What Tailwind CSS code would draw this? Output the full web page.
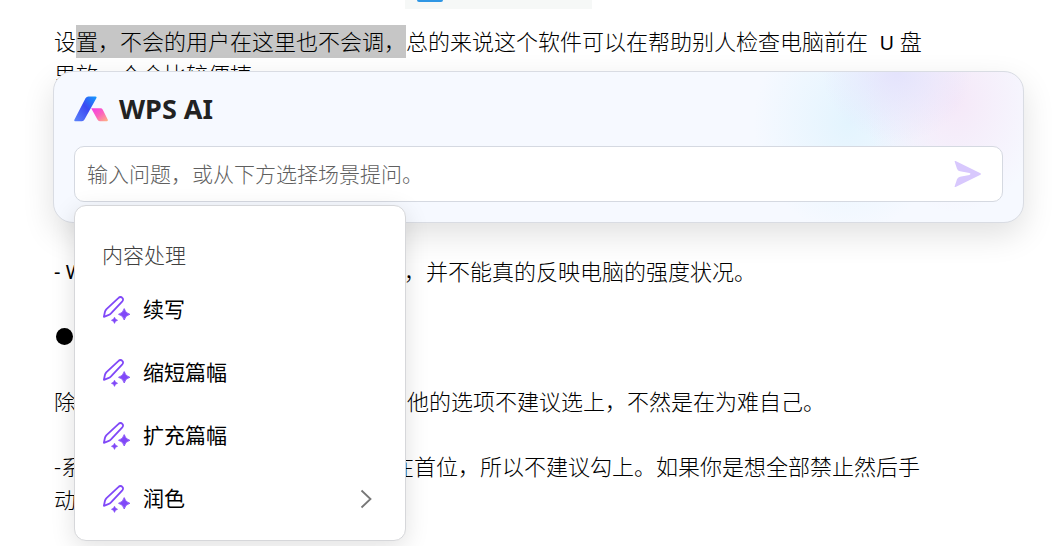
<!DOCTYPE html>
<html lang="zh-CN">
<head>
<meta charset="utf-8">
<title>WPS AI</title>
<script src="https://cdn.jsdelivr.net/npm/@tailwindcss/browser@4"></script>
</head>
<body class="relative min-h-screen overflow-hidden bg-white font-['Noto_Sans','Noto_Sans_CJK_SC',sans-serif] text-black">

<svg class="hidden">
  <symbol id="pen" viewBox="0 0 28 28">
    <path d="M.9 20.800 1.900 16Q2.300 14.400 3.500 13.100L15.600 1.800a2.500 2.500 0 0 1 3.700 0 2.500 2.500 0 0 1 0 3.600L8 17.400Q6.800 18.600 5.300 19.100Z" fill="none" stroke="#8048f8" stroke-width="1.800" stroke-linejoin="round"/>
    <path d="M21.200 12.600Q22.300 17.200 26.900 18.300 22.300 19.400 21.200 24 20.100 19.400 15.500 18.300 20.100 17.200 21.200 12.600Z" fill="#8048f8" stroke="#8048f8" stroke-width=".8" stroke-linejoin="round"/>
    <path d="M11.500 21.200Q12.100 23.700 14.600 24.300 12.100 24.900 11.500 27.400 10.900 24.900 8.400 24.300 10.900 23.700 11.500 21.200Z" fill="#8048f8" stroke="#8048f8" stroke-width=".6" stroke-linejoin="round"/>
  </symbol>
</svg>

<!-- Document -->
<main class="pl-[54px] text-[22px] leading-[33px] font-light whitespace-nowrap">
  <div class="ml-[351px] h-[9px] w-[187px] bg-[#f6f8f7]">
    <div class="ml-3 h-[2px] w-[26px] rounded-b-sm bg-[#2f96e4]"></div>
  </div>
  <p class="mt-4 leading-8">设<span class="inline-block h-[33px] bg-[#c6c6c6] align-top">置，不会的用户在这里也不会调，</span>总的来说这个软件可以在帮助别人检查电脑前在&nbsp; <span class="text-xl font-normal">U</span> 盘<br>里放一个会比较便捷</p>
  <p class="mt-[165px] flex"><span class="w-[350px] text-xl leading-[33px] font-normal">- W</span><span>，并不能真的反映电脑的强度状况。</span></p>
  <p class="mt-8 flex h-[33px] items-center"><span class="ml-[2px] size-[17px] rounded-full bg-black"></span></p>
  <p class="mt-8 flex"><span class="w-[353px]">除</span><span>他的选项不建议选上，不然是在为难自己。</span></p>
  <div class="mt-8">
    <p class="flex"><span class="w-[338px]">-系</span><span>在首位，所以不建议勾上。如果你是想全部禁止然后手</span></p>
    <p>动</p>
  </div>
</main>

<!-- Assistant panel floating over the document -->
<section aria-label="WPS AI" class="absolute top-[71px] right-8 left-[53px] rounded-[20px] border border-[#d9dce3] bg-[#f6f9ff] bg-[radial-gradient(ellipse_75px_70px_at_87%_0%,#e4e3fc,#e4e3fc00),radial-gradient(ellipse_90px_110px_at_93%_20%,#f5e8f8,#f5e8f800),radial-gradient(ellipse_95px_110px_at_82%_34%,#e3f4fe,#e3f4fe00)] px-5 pb-5 shadow-[0_12px_32px_rgba(0,0,0,0.12)]">
  <header class="flex h-[74px] items-center gap-[11px]">
    <svg class="h-[26px] w-[34px]" viewBox="0 0 34 26" aria-hidden="true">
      <defs>
        <linearGradient id="blue" x1="1" y1="0" x2="0" y2="1"><stop stop-color="#149cff"/><stop offset=".45" stop-color="#3b49f2"/><stop offset="1" stop-color="#5c84fb"/></linearGradient>
        <linearGradient id="pink" x1="0" y1="0" x2="1" y2="1"><stop stop-color="#f53ae9"/><stop offset=".5" stop-color="#fb62bd"/><stop offset="1" stop-color="#ffb681"/></linearGradient>
      </defs>
      <path d="M11.500 2.200Q12.600.5 14.400.5H21.300Q23.200.5 22.300 2.200L10.500 23.500Q9.600 25.200 8 25.200H1Q-.2 25.200.5 23.600Z" fill="url(#blue)"/>
      <path d="M17.200 12.300H26.500Q28 12.300 28.800 13.700L33.700 23.500Q34.300 25.200 32.800 25.200H25.800Q24.200 25.200 23.400 23.600Z" fill="url(#pink)"/>
    </svg>
    <h1 class="text-[27px] leading-8 font-bold text-[#222]">WPS AI</h1>
  </header>
  <div class="relative">
    <form class="flex h-14 items-center rounded-[10px] border border-[#d5d9e1] bg-white pr-5 pl-3">
      <input type="text" aria-label="输入问题" placeholder="输入问题，或从下方选择场景提问。" class="h-full min-w-0 flex-1 text-[21px] font-light outline-none placeholder:text-[#606060] placeholder:opacity-100">
      <button type="submit" aria-label="发送">
        <svg class="size-7" viewBox="0 0 28 28" fill="#d8c8fd"><path d="M.6 1.500Q.6.6 1.600 1L26.500 13.300Q27.500 14 26.500 14.700L1.600 27Q.6 27.400.6 26.500L3 19.200Q3.700 17.200 6 16.700L15.500 14.900Q17.500 14 15.500 13.100L6 11.300Q3.700 10.800 3 8.800Z"/></svg>
      </button>
    </form>
    <div class="absolute top-[59px] left-0 w-[332px] rounded-xl border border-[#d6d7da] bg-white pt-7 pb-[10px] text-[21px] shadow-[0_6px_24px_rgba(0,0,0,0.12)]">
      <h2 class="px-[27px] leading-[42px] font-light text-[#404040]">内容处理</h2>
      <ul class="pt-[2px]">
        <li><button type="button" class="flex h-[63px] w-full items-center gap-3 px-7 text-left"><svg class="size-7"><use href="#pen"/></svg>续写</button></li>
        <li><button type="button" class="flex h-[63px] w-full items-center gap-3 px-7 text-left"><svg class="size-7"><use href="#pen"/></svg>缩短篇幅</button></li>
        <li><button type="button" class="flex h-[63px] w-full items-center gap-3 px-7 text-left"><svg class="size-7"><use href="#pen"/></svg>扩充篇幅</button></li>
        <li><button type="button" class="flex h-[63px] w-full items-center gap-3 px-7 text-left"><svg class="size-7"><use href="#pen"/></svg><span class="flex-1">润色</span><svg class="mr-[5px] h-5 w-3" viewBox="0 0 12 20" fill="none" stroke="#777" stroke-width="1.800"><path d="M1.500 1.500 10.500 10 1.500 18.500"/></svg></button></li>
      </ul>
    </div>
  </div>
</section>
</body>
</html>
